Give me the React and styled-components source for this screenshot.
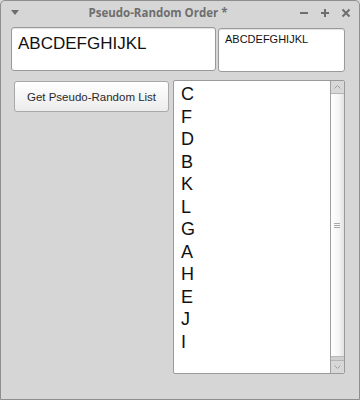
import React from "react";
import styled, { createGlobalStyle } from "styled-components";

const Global = createGlobalStyle`
  html, body { margin: 0; padding: 0; background: #d6d6d6; }
  body { font-family: "Liberation Sans", Arial, sans-serif; }
`;

const Window = styled.div`
  width: 360px;
  height: 400px;
  box-sizing: border-box;
  background: #d6d6d6;
  border: 1px solid #8f8f8f;
  border-radius: 5px 5px 0 0;
  display: flex;
  flex-direction: column;
  overflow: hidden;
`;

const TitleBar = styled.div`
  height: 25px;
  display: flex;
  align-items: center;
  padding: 0 3px 0 8px;
  box-sizing: border-box;
`;

const Title = styled.div`
  flex: 1;
  text-align: center;
  font-family: "Open Sans", "DejaVu Sans", sans-serif;
  font-weight: 700;
  font-size: 11.5px;
  color: #6e6e6e;
  margin-top: -2px;
  padding-left: 2px;
`;

const TitleButton = styled.div`
  width: ${(p) => p.$w || 21}px;
  height: 20px;
  display: flex;
  align-items: center;
  justify-content: center;
  margin-top: -2px;
`;

const Body = styled.div`
  display: flex;
  flex-direction: column;
  padding: 1px 0 0 10px;
  gap: 8px;
`;

const TopRow = styled.div`
  display: flex;
  gap: 2px;
  align-items: flex-start;
`;

const Field = styled.div`
  box-sizing: border-box;
  width: ${(p) => p.$w}px;
  height: 44px;
  margin-top: ${(p) => p.$mt || 0}px;
  background: #ffffff;
  border: 1px solid #9a9a9a;
  border-radius: 3px;
  box-shadow: inset 0 1px 1px rgba(0, 0, 0, 0.12);
  padding: ${(p) => p.$pad};
  font-family: "Liberation Sans", Arial, sans-serif;
  font-size: ${(p) => p.$fs}px;
  color: #111;
  line-height: 1;
`;

const MainRow = styled.div`
  display: flex;
  align-items: flex-start;
  gap: 4px;
`;

const Button = styled.button`
  box-sizing: border-box;
  width: 155px;
  height: 31px;
  margin: 1px 0 0 3px;
  background: linear-gradient(#ffffff, #ececec);
  border: 1px solid #a8a8a8;
  border-radius: 3px;
  font-family: "Liberation Sans", Arial, sans-serif;
  font-size: 11.5px;
  color: #2a2a2a;
  padding: 0;
  padding-top: 1px;
`;

const ListBox = styled.div`
  box-sizing: border-box;
  width: 172px;
  height: 294px;
  background: #fff;
  border: 1px solid #9a9a9a;
  border-radius: 2px;
  display: flex;
  overflow: hidden;
`;

const Items = styled.div`
  flex: 1;
  padding: 2px 0 0 7px;
  font-family: "Liberation Sans", Arial, sans-serif;
  font-size: 18px;
  line-height: 22.55px;
  color: #111;
`;

const Item = styled.div``;

const ScrollBar = styled.div`
  width: 13px;
  border-left: 1px solid #a0a0a0;
  background: #d0d0d0;
  display: flex;
  flex-direction: column;
`;

const ArrowBtn = styled.div`
  height: 13px;
  box-sizing: border-box;
  background: #d8d8d8;
  border-top: ${(p) => (p.$down ? "1px solid #b5b5b5" : "none")};
  border-bottom: ${(p) => (p.$down ? "none" : "1px solid #b5b5b5")};
  display: flex;
  align-items: center;
  justify-content: center;
`;

const Thumb = styled.div`
  flex: 1;
  margin-bottom: 3px;
  background: linear-gradient(to right, #ffffff 0%, #f6f6f6 60%, #e2e2e2 100%);
  border-bottom: 1px solid #b8b8b8;
  display: flex;
  align-items: center;
  justify-content: center;
`;

const Grip = styled.div`
  width: 6px;
  display: flex;
  flex-direction: column;
  gap: 1px;
  margin-left: -1px;
  & > span { height: 1px; background: #a8a8a8; display: block; }
`;

const letters = ["C", "F", "D", "B", "K", "L", "G", "A", "H", "E", "J", "I"];

export default function App() {
  return (
    <>
      <Global />
      <Window>
        <TitleBar>
          <TitleButton $w={12}>
            <svg width="8" height="5" viewBox="0 0 8 5">
              <path d="M0 0 L8 0 L4 5 Z" fill="#6e6e6e" />
            </svg>
          </TitleButton>
          <Title>Pseudo-Random Order *</Title>
          <TitleButton>
            <svg width="10" height="10" viewBox="0 0 10 10">
              <path d="M1 5 H9" stroke="#6e6e6e" strokeWidth="2" />
            </svg>
          </TitleButton>
          <TitleButton>
            <svg width="10" height="10" viewBox="0 0 10 10">
              <path d="M1 5 H9 M5 1 V9" stroke="#6e6e6e" strokeWidth="2" />
            </svg>
          </TitleButton>
          <TitleButton>
            <svg width="10" height="10" viewBox="0 0 10 10">
              <path d="M1.5 1.5 L8.5 8.5 M8.5 1.5 L1.5 8.5" stroke="#6e6e6e" strokeWidth="2" />
            </svg>
          </TitleButton>
        </TitleBar>
        <Body>
          <TopRow>
            <Field $w={205} $fs={17} $pad="7px 6px">ABCDEFGHIJKL</Field>
            <Field $w={127} $fs={11} $mt={1} $pad="5px 6px">ABCDEFGHIJKL</Field>
          </TopRow>
          <MainRow>
            <Button>Get Pseudo-Random List</Button>
            <ListBox>
              <Items>
                {letters.map((l) => (
                  <Item key={l}>{l}</Item>
                ))}
              </Items>
              <ScrollBar>
                <ArrowBtn>
                  <svg width="7" height="4" viewBox="0 0 7 4">
                    <path d="M0.5 3.5 L3.5 0.5 L6.5 3.5" stroke="#a0a0a0" fill="none" />
                  </svg>
                </ArrowBtn>
                <Thumb>
                  <Grip>
                    <span />
                    <span />
                    <span />
                  </Grip>
                </Thumb>
                <ArrowBtn $down>
                  <svg width="7" height="4" viewBox="0 0 7 4">
                    <path d="M0.5 0.5 L3.5 3.5 L6.5 0.5" stroke="#a0a0a0" fill="none" />
                  </svg>
                </ArrowBtn>
              </ScrollBar>
            </ListBox>
          </MainRow>
        </Body>
      </Window>
    </>
  );
}
